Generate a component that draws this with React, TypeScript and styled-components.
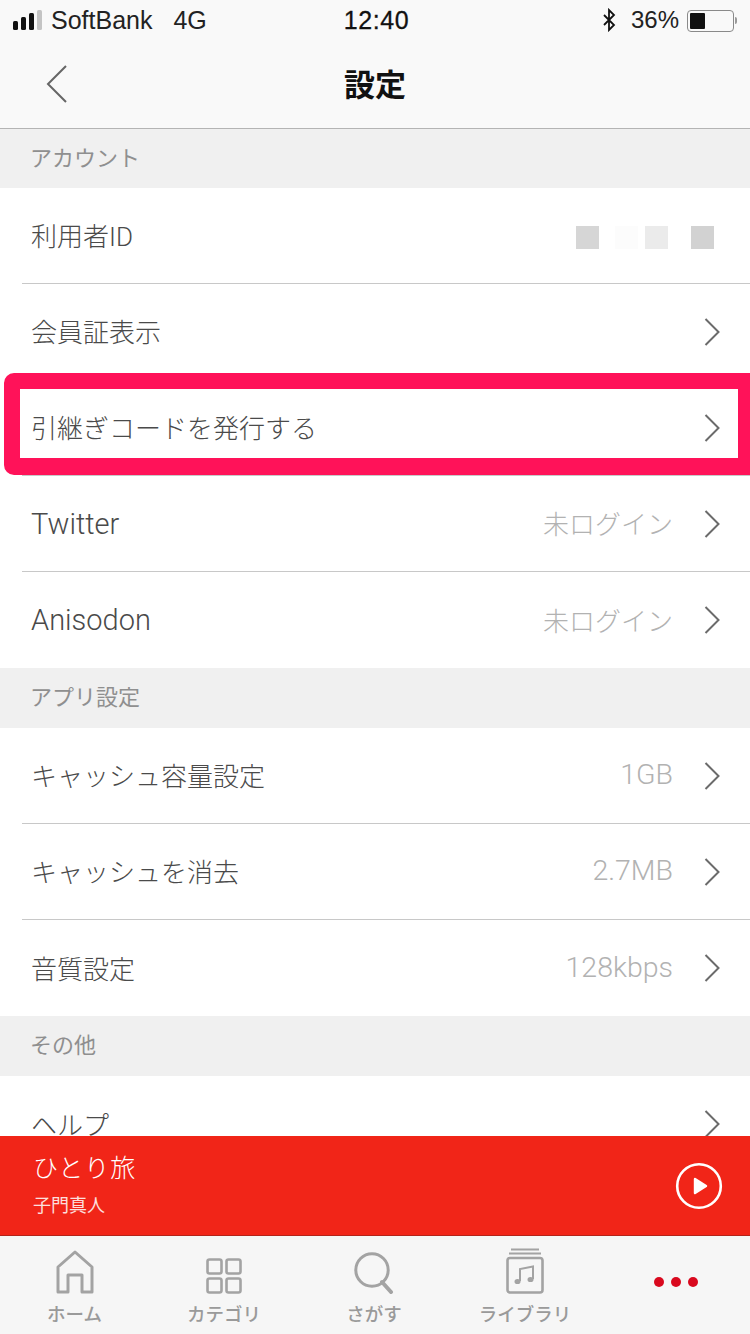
import styled, { createGlobalStyle } from 'styled-components';

const GlobalStyle = createGlobalStyle`
  html, body {
    margin: 0;
    padding: 0;
    background: #fff;
  }
  * {
    box-sizing: border-box;
  }
`;

const FONT = `"Liberation Sans", "Noto Sans CJK JP", sans-serif`;

type RowData = {
  label: string;
  value?: string;
  masked?: boolean;
  latin?: boolean;
  latinValue?: boolean;
};

const sections: { title: string; rows: RowData[] }[] = [
  {
    title: 'アカウント',
    rows: [
      { label: '利用者ID', masked: true },
      { label: '会員証表示' },
      { label: '引継ぎコードを発行する' },
      { label: 'Twitter', value: '未ログイン', latin: true },
      { label: 'Anisodon', value: '未ログイン', latin: true },
    ],
  },
  {
    title: 'アプリ設定',
    rows: [
      { label: 'キャッシュ容量設定', value: '1GB', latinValue: true },
      { label: 'キャッシュを消去', value: '2.7MB', latinValue: true },
      { label: '音質設定', value: '128kbps', latinValue: true },
    ],
  },
  {
    title: 'その他',
    rows: [{ label: 'ヘルプ' }],
  },
];

const Chevron = () => (
  <ChevronIcon width="18" height="30" viewBox="0 0 18 30">
    <path d="M2.5 2 L15.5 15 L2.5 28" fill="none" stroke="#6b6b6b" strokeWidth="2" />
  </ChevronIcon>
);

const App = () => {
  return (
    <Page>
      <GlobalStyle />
      <TopArea>
        <StatusBar>
          <StatusLeft>
            <Signal>
              <SignalBar $h={9} />
              <SignalBar $h={13} />
              <SignalBar $h={17} />
              <SignalBar $h={20} $off />
            </Signal>
            <Carrier>SoftBank</Carrier>
            <Carrier>4G</Carrier>
          </StatusLeft>
          <Clock>12:40</Clock>
          <StatusRight>
            <svg width="14" height="24" viewBox="0 0 14 24">
              <path
                d="M2 7 L12 17 L7 22 L7 2 L12 7 L2 17"
                fill="none"
                stroke="#111"
                strokeWidth="1.8"
              />
            </svg>
            <Percent>36%</Percent>
            <Battery>
              <BatteryFill />
            </Battery>
            <BatteryTip />
          </StatusRight>
        </StatusBar>
        <NavBar>
          <BackButton width="24" height="40" viewBox="0 0 24 40">
            <path d="M21 2 L3 20 L21 38" fill="none" stroke="#666" strokeWidth="2" />
          </BackButton>
          <NavTitle>設定</NavTitle>
        </NavBar>
      </TopArea>

      <ScrollArea>
        {sections.map((section, s) => (
          <div key={section.title}>
            <SectionHeader $first={s === 0}>{section.title}</SectionHeader>
            {section.rows.map((row, i) => (
              <Row key={row.label} $last={i === section.rows.length - 1}>
                <RowLabel $latin={row.latin}>{row.label}</RowLabel>
                {row.value && <RowValue $latin={row.latinValue}>{row.value}</RowValue>}
                {row.masked ? (
                  <MaskGroup>
                    <MaskBlock $c="#d6d6d6" $gap={0} />
                    <MaskBlock $c="#fcfcfc" $gap={16} />
                    <MaskBlock $c="#ebebeb" $gap={7} />
                    <MaskBlock $c="#d2d2d2" $gap={23} />
                  </MaskGroup>
                ) : (
                  <Chevron />
                )}
              </Row>
            ))}
          </div>
        ))}
        <Highlight />
      </ScrollArea>

      <Player>
        <div>
          <TrackTitle>ひとり旅</TrackTitle>
          <TrackArtist>子門真人</TrackArtist>
        </div>
        <svg width="48" height="48" viewBox="0 0 48 48">
          <circle cx="24" cy="24" r="21.8" fill="none" stroke="#fff" strokeWidth="2.6" />
          <path d="M20 17 L31 24 L20 31 Z" fill="#fff" stroke="#fff" strokeWidth="2.4" strokeLinejoin="round" />
        </svg>
      </Player>

      <TabBar>
        <Tab>
          <TabIcon>
            <svg width="38" height="44" viewBox="0 0 38 44">
              <path
                d="M2 42 L2 17 L19 2 L36 17 L36 42 L26 42 L26 25 L12 25 L12 42 Z"
                fill="none"
                stroke="#a3a3a3"
                strokeWidth="3"
                strokeLinejoin="round"
              />
            </svg>
          </TabIcon>
          <TabLabel>ホーム</TabLabel>
        </Tab>
        <Tab>
          <TabIcon>
            <svg width="36" height="36" viewBox="0 0 36 36">
              <g fill="none" stroke="#a3a3a3" strokeWidth="2.6">
                <rect x="1.5" y="1.5" width="14" height="14" rx="2" />
                <rect x="20.5" y="1.5" width="14" height="14" rx="2" />
                <rect x="1.5" y="20.5" width="14" height="14" rx="2" />
                <rect x="20.5" y="20.5" width="14" height="14" rx="2" />
              </g>
            </svg>
          </TabIcon>
          <TabLabel>カテゴリ</TabLabel>
        </Tab>
        <Tab>
          <TabIcon>
            <svg width="40" height="42" viewBox="0 0 40 42">
              <circle cx="18" cy="18" r="16.2" fill="none" stroke="#a3a3a3" strokeWidth="3" />
              <path d="M28 30 L37 40" stroke="#a3a3a3" strokeWidth="4" strokeLinecap="round" />
            </svg>
          </TabIcon>
          <TabLabel>さがす</TabLabel>
        </Tab>
        <Tab>
          <TabIcon>
            <svg width="38" height="46" viewBox="0 0 38 46">
              <g fill="none" stroke="#a3a3a3">
                <path d="M5 1.5 H33" strokeWidth="2" />
                <path d="M3 5.5 H35" strokeWidth="2" />
                <rect x="1.5" y="10" width="35" height="34.5" rx="2.5" strokeWidth="2.6" />
                <path d="M14 33 V21 L27 18.5 V31" strokeWidth="2" />
              </g>
              <ellipse cx="11.5" cy="33.5" rx="3" ry="2.6" fill="#a3a3a3" />
              <ellipse cx="24.5" cy="31.5" rx="3" ry="2.6" fill="#a3a3a3" />
            </svg>
          </TabIcon>
          <TabLabel>ライブラリ</TabLabel>
        </Tab>
        <Tab>
          <TabIcon>
            <Dots>
              <Dot />
              <Dot />
              <Dot />
            </Dots>
          </TabIcon>
        </Tab>
      </TabBar>
    </Page>
  );
};

export default App;

const Page = styled.div`
  width: 750px;
  height: 1334px;
  display: flex;
  flex-direction: column;
  overflow: hidden;
  background: #fff;
  font-family: ${FONT};
`;

const TopArea = styled.div`
  height: 129px;
  flex: none;
  background: #f9f9f9;
  border-bottom: 1px solid #b4b4b4;
`;

const StatusBar = styled.div`
  height: 40px;
  padding: 0 12px 0 13px;
  display: grid;
  grid-template-columns: 1fr auto 1fr;
  align-items: center;
  color: #111;
`;

const StatusLeft = styled.div`
  display: flex;
  align-items: center;
`;

const Signal = styled.div`
  display: flex;
  align-items: flex-end;
  gap: 3px;
  height: 20px;
  margin-right: 9px;
`;

const SignalBar = styled.div<{ $h: number; $off?: boolean }>`
  width: 5px;
  height: ${(p) => p.$h}px;
  border-radius: 1.5px;
  background: ${(p) => (p.$off ? '#c4c4c4' : '#111')};
`;

const Carrier = styled.span`
  font-size: 25px;
  margin-right: 21px;
  color: #222;
`;

const Clock = styled.div`
  font-size: 25px;
  font-weight: 500;
  letter-spacing: 0.6px;
  margin-left: 2px;
  -webkit-text-stroke: 0.3px #111;
`;

const StatusRight = styled.div`
  display: flex;
  align-items: center;
  justify-content: flex-end;
`;

const Percent = styled.span`
  font-size: 24px;
  margin-left: 15px;
  margin-right: 8px;
  color: #222;
`;

const Battery = styled.div`
  width: 47px;
  height: 22px;
  border: 1.5px solid #8a8a8a;
  border-radius: 4px;
  padding: 2px;
  margin-top: 1px;
`;

const BatteryFill = styled.div`
  width: 15px;
  height: 100%;
  background: #111;
  border-radius: 1px;
`;

const BatteryTip = styled.div`
  width: 2px;
  height: 7px;
  margin: 1px 1px 0 1px;
  background: #9a9a9a;
  border-radius: 0 2px 2px 0;
`;

const NavBar = styled.div`
  height: 88px;
  padding-bottom: 4px;
  position: relative;
  display: flex;
  align-items: center;
  justify-content: center;
`;

const BackButton = styled.svg`
  position: absolute;
  left: 45px;
  top: 24px;
`;

const NavTitle = styled.div`
  font-family: "Noto Sans CJK JP", sans-serif;
  font-size: 31px;
  font-weight: 700;
  color: #111;
`;

const ScrollArea = styled.div`
  flex: 1;
  min-height: 0;
  overflow: hidden;
  position: relative;
`;

const SectionHeader = styled.div<{ $first?: boolean }>`
  height: ${(p) => (p.$first ? 59 : 60)}px;
  padding: 0 0 6px 30px;
  display: flex;
  align-items: center;
  background: #f0f0f0;
  color: #8f8f8f;
  font-size: 22px;
`;

const Row = styled.div<{ $last?: boolean }>`
  height: 96px;
  margin-left: 22px;
  padding: 0 29px 2px 9px;
  display: flex;
  align-items: center;
  background: #fff;
  border-bottom: ${(p) => (p.$last ? 'none' : '1px solid #c8c8c8')};
`;

const RowLabel = styled.div<{ $latin?: boolean }>`
  flex: 1;
  color: #4a4a4a;
  font-size: ${(p) => (p.$latin ? 29 : 26)}px;
  margin-top: ${(p) => (p.$latin ? 2 : 0)}px;
  font-family: Roboto, "Noto Sans CJK JP", sans-serif;
  font-weight: 300;
`;

const RowValue = styled.div<{ $latin?: boolean }>`
  color: #b2b2b2;
  font-size: ${(p) => (p.$latin ? 28.5 : 26)}px;
  margin-right: 30px;
  font-family: Roboto, "Noto Sans CJK JP", sans-serif;
  font-weight: 300;
`;

const ChevronIcon = styled.svg`
  display: block;
  flex: none;
  margin-top: 2px;
`;

const MaskGroup = styled.div`
  display: flex;
  margin-right: 7px;
  margin-top: 6px;
`;

const MaskBlock = styled.div<{ $c: string; $gap: number }>`
  width: 23px;
  height: 23px;
  margin-left: ${(p) => p.$gap}px;
  background: ${(p) => p.$c};
`;

/* annotation ring that lies over the third row */
const Highlight = styled.div`
  position: absolute;
  left: 4px;
  right: 0;
  top: 244px;
  height: 102px;
  border: solid #ff1259;
  border-width: 16px 12px 17px 16px;
  border-radius: 10px 0 0 10px;
  pointer-events: none;
`;

const Player = styled.div`
  height: 100px;
  flex: none;
  padding: 0 27px 0 33px;
  display: flex;
  align-items: center;
  justify-content: space-between;
  background: #f12518;
  border-bottom: 1px solid #b3241a;
  color: #fff;
`;

const TrackTitle = styled.div`
  font-family: "Noto Sans CJK JP", sans-serif;
  font-size: 25px;
  font-weight: 300;
  line-height: 32px;
  letter-spacing: 1px;
  margin-top: -6px;
`;

const TrackArtist = styled.div`
  font-family: "Noto Sans CJK JP", sans-serif;
  font-size: 18px;
  line-height: 24px;
  margin-top: 10px;
  opacity: 0.85;
`;

const TabBar = styled.div`
  height: 98px;
  flex: none;
  display: grid;
  grid-template-columns: 149px 150px 150px 152px 149px;
  background: #f6f6f6;
`;

const Tab = styled.div`
  display: flex;
  flex-direction: column;
  align-items: center;
`;

const TabIcon = styled.div`
  height: 58px;
  display: flex;
  align-items: flex-end;
  justify-content: center;
`;

const TabLabel = styled.div`
  font-family: "Noto Sans CJK JP", sans-serif;
  font-size: 18.5px;
  font-weight: 500;
  line-height: 26px;
  margin-top: 6px;
  color: #9a9a9a;
`;

const Dots = styled.div`
  display: flex;
  gap: 7px;
  margin-bottom: 7px;
`;

const Dot = styled.div`
  width: 10px;
  height: 10px;
  border-radius: 50%;
  background: #d9091e;
`;
